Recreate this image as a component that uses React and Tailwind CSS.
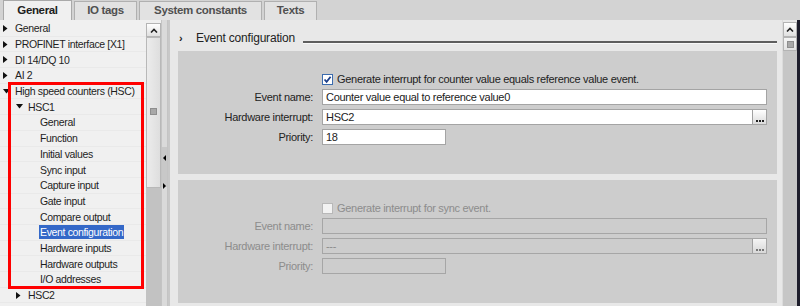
import React from "react";

const font = "font-['Liberation_Sans',Arial,sans-serif]";

const Arrow = ({ down }) =>
  down ? (
    <svg width="7" height="5" viewBox="0 0 7 5" className="shrink-0">
      <polygon points="0,0 7,0 3.5,4.5" fill="#111" />
    </svg>
  ) : (
    <svg width="5" height="7" viewBox="0 0 5 7" className="shrink-0">
      <polygon points="0,0 4.5,3.5 0,7" fill="#111" />
    </svg>
  );

const TreeRow = ({ level = 0, arrow, children, selected }) => {
  const pad = level === 0 ? "pl-[3px]" : level === 1 ? "pl-[16px]" : "pl-[39px]";
  return (
    <div
      className={`h-[15.7px] flex items-center whitespace-nowrap ${pad} border-b border-[#e9e9e9] box-border`}
    >
      {arrow && <span className="w-[11px] flex items-center">{<Arrow down={arrow === "down"} />}</span>}
      <span
        className={
          selected
            ? "bg-[#3468c8] text-white px-[1px] leading-[14px]"
            : "text-[#1e1e1e] px-[1px] leading-[14px]"
        }
      >
        {children}
      </span>
    </div>
  );
};

const Tab = ({ active, children, w }) => (
  <div
    className={`${w} h-[19px] flex items-center justify-center border border-b-0 text-[11.5px] tracking-[-0.35px] font-bold whitespace-nowrap ${
      active
        ? "bg-[#f0f0f0] border-[#a9a9a9] text-[#202020] h-[20px]"
        : "bg-[#e2e2e2] border-[#b0b0b0] text-[#505050]"
    }`}
  >
    {children}
  </div>
);

const DotsButton = ({ disabled }) => (
  <div
    className={`w-[14px] h-full border-l border-[#a0a0a0] flex items-end justify-center pb-[2px] gap-[1px] ${
      disabled ? "bg-gradient-to-b from-[#f4f4f4] to-[#d8d8d8]" : "bg-gradient-to-b from-white to-[#dcdcdc]"
    }`}
  >
    <span className={`w-[2px] h-[2px] ${disabled ? "bg-[#777]" : "bg-[#222]"}`} />
    <span className={`w-[2px] h-[2px] ${disabled ? "bg-[#777]" : "bg-[#222]"}`} />
    <span className={`w-[2px] h-[2px] ${disabled ? "bg-[#777]" : "bg-[#222]"}`} />
  </div>
);

const Field = ({ label, value, width = "w-[445px]", button, disabled }) => (
  <div className="flex items-center h-[16px] mb-[4px]">
    <div
      className={`w-[135px] text-right whitespace-nowrap ${disabled ? "text-[#8c8c8c]" : "text-[#222]"}`}
    >
      {label}
    </div>
    <div
      className={`ml-[9px] ${width} h-[16px] flex border ${
        disabled ? "bg-[#cdcdcd] border-[#a6a6a6]" : "bg-white border-[#a4a4a4]"
      }`}
    >
      <div className={`flex-1 leading-[14px] pl-[3px] ${disabled ? "text-[#8c8c8c]" : "text-[#222]"}`}>
        {value}
      </div>
      {button && <DotsButton disabled={disabled} />}
    </div>
  </div>
);

const Panel = ({ checked, text, fields, disabled }) => (
  <div className="bg-[#cdcdcd] pt-[22px] text-[11px] tracking-[-0.3px]">
    <div className="flex items-center h-[12px] mb-[4px] pl-[144px]">
      {checked ? (
        <div className="w-[11px] h-[11px] border border-[#3c6cae] bg-white flex items-center justify-center">
          <svg width="9" height="9" viewBox="0 0 9 9">
            <path d="M1.5 4.5 L3.6 6.8 L7.6 1.8" stroke="#1c3f8a" strokeWidth="1.8" fill="none" />
          </svg>
        </div>
      ) : (
        <div className="w-[11px] h-[11px] border border-[#b8b8b8] bg-[#f2f2f2]" />
      )}
      <span className={`ml-[4px] whitespace-nowrap ${disabled ? "text-[#8c8c8c]" : "text-[#222]"}`}>{text}</span>
    </div>
    {fields.map((f) => (
      <Field key={f.label} {...f} disabled={disabled} />
    ))}
  </div>
);

export default function App() {
  return (
    <div className={`w-[800px] h-[306px] overflow-hidden bg-[#d3d3d3] flex flex-col ${font}`}>
      {/* Tabs */}
      <div className="h-[20px] flex items-end pl-[3px] gap-[2px] shrink-0">
        <Tab active w="w-[69px]">General</Tab>
        <Tab w="w-[63px]">IO tags</Tab>
        <Tab w="w-[123px]">System constants</Tab>
        <Tab w="w-[53px]">Texts</Tab>
      </div>

      <div className="flex flex-1 min-h-0">
        {/* Tree */}
        <div className="w-[146px] bg-[#f0f0f0] pt-[1px] text-[10.5px] tracking-[-0.35px] relative">
          <TreeRow arrow="right">General</TreeRow>
          <TreeRow arrow="right">PROFINET interface [X1]</TreeRow>
          <TreeRow arrow="right">DI 14/DQ 10</TreeRow>
          <TreeRow arrow="right">AI 2</TreeRow>
          <TreeRow arrow="down">High speed counters (HSC)</TreeRow>
          <TreeRow level={1} arrow="down">HSC1</TreeRow>
          <TreeRow level={2}>General</TreeRow>
          <TreeRow level={2}>Function</TreeRow>
          <TreeRow level={2}>Initial values</TreeRow>
          <TreeRow level={2}>Sync input</TreeRow>
          <TreeRow level={2}>Capture input</TreeRow>
          <TreeRow level={2}>Gate input</TreeRow>
          <TreeRow level={2}>Compare output</TreeRow>
          <TreeRow level={2} selected>Event configuration</TreeRow>
          <TreeRow level={2}>Hardware inputs</TreeRow>
          <TreeRow level={2}>Hardware outputs</TreeRow>
          <TreeRow level={2}>I/O addresses</TreeRow>
          <TreeRow level={1} arrow="right">HSC2</TreeRow>
          {/* annotation box */}
          <div className="absolute left-[8px] top-[62px] w-[136px] h-[207px] border-[3px] border-[#ff0000] pointer-events-none" />
        </div>

        {/* Left scrollbar */}
        <div className="w-[15px] flex flex-col bg-[#c2c2c2]">
          <div className="h-[3px] bg-[#f0f0f0]" />
          <div className="h-[14px] bg-gradient-to-b from-white to-[#e0e0e0] border border-[#b4b4b4] flex items-center justify-center">
            <svg width="8" height="5" viewBox="0 0 8 5">
              <path d="M1 4.5 L4 1.5 L7 4.5" stroke="#222" strokeWidth="1.6" fill="none" />
            </svg>
          </div>
          <div className="h-[151px] bg-gradient-to-r from-[#ececec] to-[#dedede] border border-[#b8b8b8] flex items-start justify-center pt-[70px]">
            <div className="w-[7px] h-[7px] bg-[#a8a8a8] border border-[#8e8e8e]" />
          </div>
        </div>

        {/* Splitter */}
        <div className="w-[7px] bg-[#dadada] border-x border-[#c4c4c4] flex flex-col items-center pt-[127px]">
          <div className="w-[5px] h-[40px] bg-[#c8c8c8] flex flex-col items-center pt-[8px] gap-[22px]">
            <span className="w-0 h-0 border-y-[3px] border-y-transparent border-r-[3px] border-r-black" />
            <span className="w-0 h-0 border-y-[3px] border-y-transparent border-l-[3px] border-l-black" />
          </div>
        </div>
        <div className="w-[2px] bg-[#c8c8c8]" />

        {/* Main */}
        <div className="flex-1 bg-[#e8e8e8] flex flex-col pl-[8px] pr-[5px]">
          <div className="h-[31px] flex items-start pt-[10px] shrink-0">
            <span className="w-[18px] pl-[1px] text-[11px] leading-[16px] text-[#222] font-bold">›</span>
            <span className="text-[12px] tracking-[-0.2px] leading-[16px] text-[#222] whitespace-nowrap">
              Event configuration
            </span>
            <div className="flex-1 ml-[8px] mt-[11px]">
              <div className="h-[2px] bg-[#5e5e5e]" />
              <div className="h-[1px] bg-[#f8f8f8]" />
            </div>
          </div>
          <div className="h-[123px] shrink-0 bg-[#cdcdcd]">
            <Panel
              checked
              text="Generate interrupt for counter value equals reference value event."
              fields={[
                { label: "Event name:", value: "Counter value equal to reference value0" },
                { label: "Hardware interrupt:", value: "HSC2", button: true },
                { label: "Priority:", value: "18", width: "w-[124px]" },
              ]}
            />
          </div>
          <div className="h-[6px] shrink-0" />
          <div className="h-[123px] shrink-0 bg-[#cdcdcd]">
            <Panel
              disabled
              text="Generate interrupt for sync event."
              fields={[
                { label: "Event name:", value: "" },
                { label: "Hardware interrupt:", value: "---", button: true },
                { label: "Priority:", value: "", width: "w-[124px]" },
              ]}
            />
          </div>
        </div>

        {/* Right scrollbar */}
        <div className="w-[15px] flex flex-col bg-[#c6c6c6] border-l border-[#dcdcdc]">
          <div className="h-[2px] bg-[#e8e8e8]" />
          <div className="h-[15px] bg-gradient-to-b from-white to-[#e0e0e0] border border-[#b4b4b4] flex items-center justify-center">
            <svg width="8" height="5" viewBox="0 0 8 5">
              <path d="M1 4.5 L4 1.5 L7 4.5" stroke="#222" strokeWidth="1.6" fill="none" />
            </svg>
          </div>
          <div className="h-[14px] bg-gradient-to-b from-[#f4f4f4] to-[#e2e2e2] border border-[#b4b4b4] flex items-center justify-center">
            <div className="w-[7px] h-[7px] bg-[#a8a8a8] border border-[#8e8e8e]" />
          </div>
        </div>
        <div className="w-[3px] bg-[#1e1e2c]" />
      </div>
    </div>
  );
}
